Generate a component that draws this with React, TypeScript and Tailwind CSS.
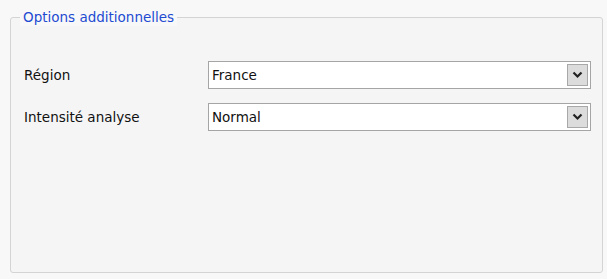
const Chevron = () => (
  <svg width="11" height="8" viewBox="0 0 11 8">
    <path d="M1.5 1.5 L5.5 5.5 L9.5 1.5" fill="none" stroke="#222" strokeWidth="2.2" />
  </svg>
)

const Combo = ({ value }: { value: string }) => (
  <div className="flex h-[28px] flex-1 items-center border border-[#a5a5a5] bg-white pl-[3px] pr-[2px]">
    <span className="flex-1 text-[13.5px] text-[#111]">{value}</span>
    <div className="flex h-[22px] w-[21px] items-center justify-center border border-[#a8a8a8] bg-[#dcdcdc]">
      <Chevron />
    </div>
  </div>
)

const App = () => {
  return (
    <div className="h-[279px] w-[607px] bg-[#f8f8f8] pl-[10px] pr-[4px] pt-[10px] font-['DejaVu_Sans',sans-serif]">
      <div className="relative mt-[7px] h-[256px] rounded-[3px] border border-[#d4d4d4] bg-[#f5f5f5] pl-[13px] pr-[11px] pt-[43px]">
        <span className="absolute left-[9px] top-[-10px] bg-[#f8f8f8] px-[3px] text-[13.5px] leading-[18px] text-[#1e4bd2]">
          Options additionnelles
        </span>
        <div className="flex flex-col gap-[14px]">
          <div className="flex items-center">
            <span className="w-[184px] text-[13.5px] text-[#111]">Région</span>
            <Combo value="France" />
          </div>
          <div className="flex items-center">
            <span className="w-[184px] text-[13.5px] text-[#111]">Intensité analyse</span>
            <Combo value="Normal" />
          </div>
        </div>
      </div>
    </div>
  )
}

export default App
